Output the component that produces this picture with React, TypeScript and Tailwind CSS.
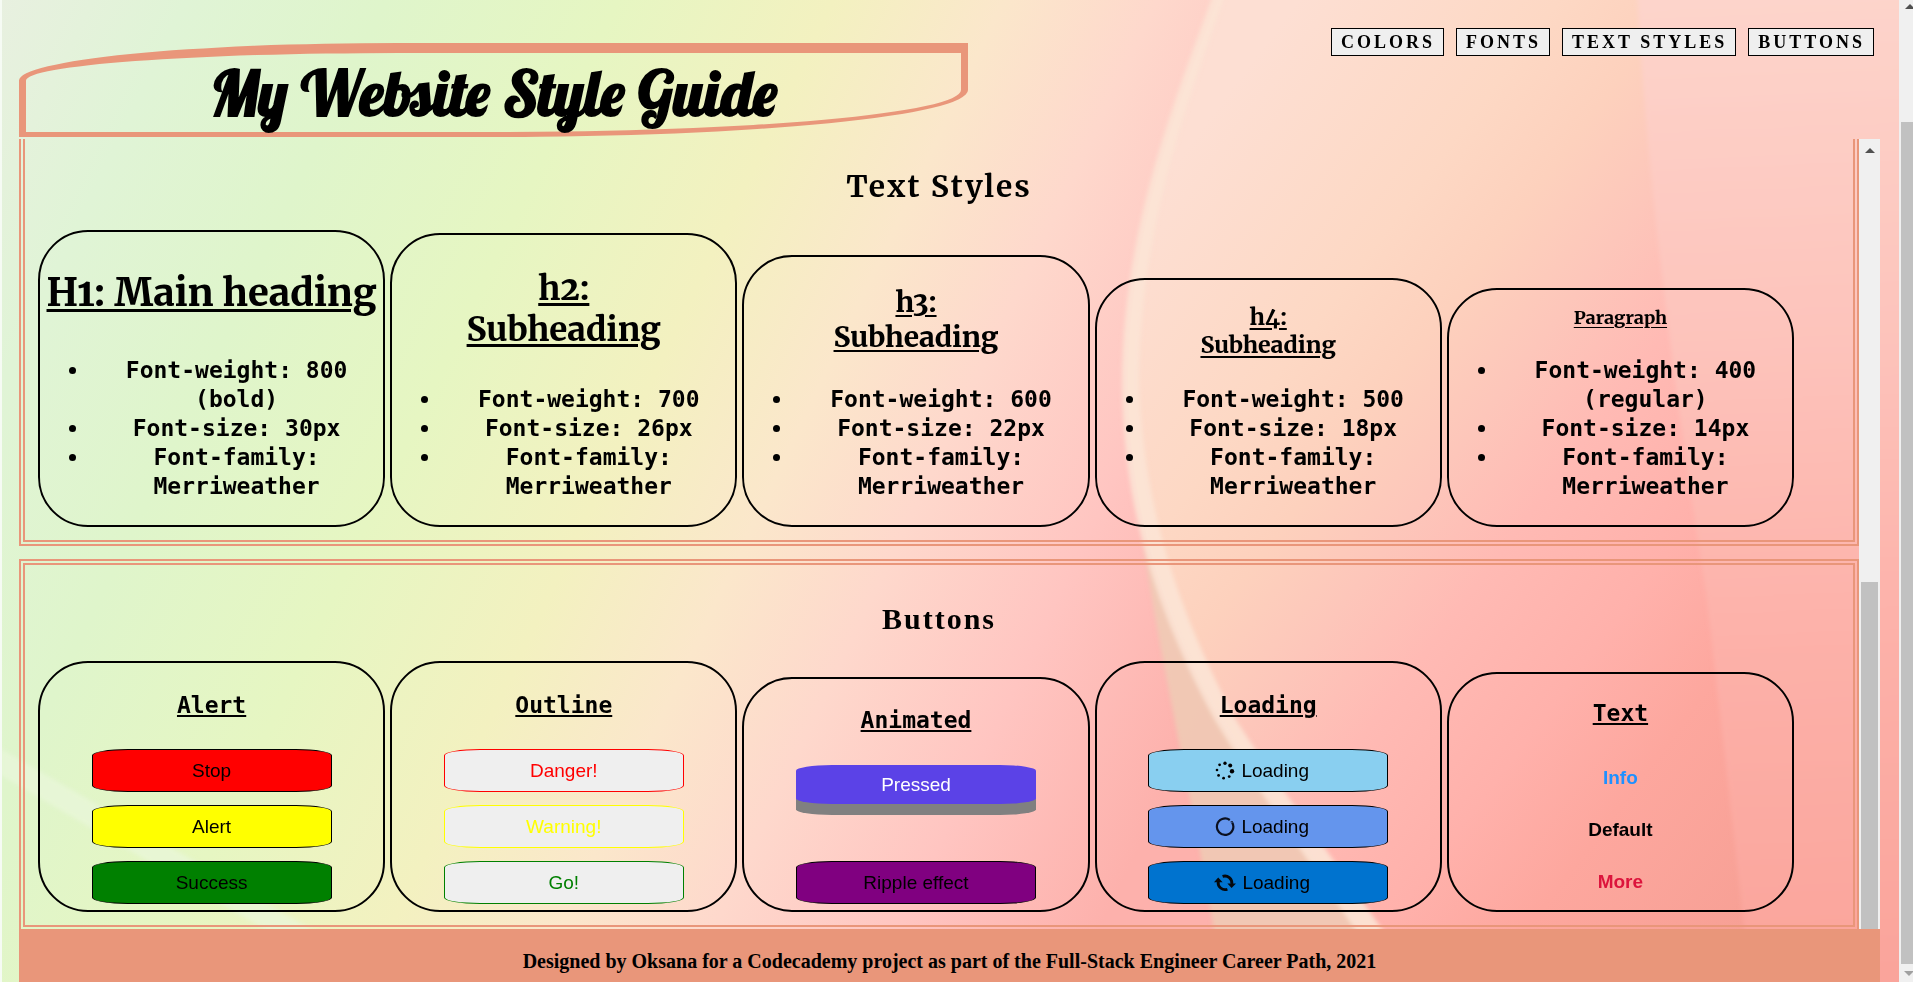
import React from "react";

const nav = ["COLORS", "FONTS", "TEXT STYLES", "BUTTONS"];

const textStyles = [
  { title: "h1", lines: ["H1: Main heading"], cls: "text-[38px] leading-[48px] mt-[37px] mb-10 decoration-[3px]", weight: "800 (bold)", size: "30px" },
  { title: "h2", lines: ["h2:", "Subheading"], cls: "text-[33px] leading-[41px] mt-[33px] mb-9 decoration-[3px]", weight: "700", size: "26px" },
  { title: "h3", lines: ["h3:", "Subheading"], cls: "text-[28px] leading-[35px] mt-7 mb-[31px] decoration-2", weight: "600", size: "22px" },
  { title: "h4", lines: ["h4:", "Subheading"], cls: "text-[23px] leading-[28px] mt-[23px] mb-[27px] decoration-2", weight: "500", size: "18px" },
  { title: "p", lines: ["Paragraph"], cls: "text-[18px] leading-[22px] mt-[17px] mb-7 decoration-1", weight: "400 (regular)", size: "14px" },
];

const serif = "font-['Merriweather','DejaVu_Serif_Condensed','DejaVu_Serif',serif]";
const times = "font-['Liberation_Serif',serif]";
const sans = "font-['Liberation_Sans',sans-serif]";
const mono = "font-['Consolas','DejaVu_Sans_Mono',monospace]";
const card = "rounded-[50px] border-2 border-black text-center";
const sectionBox = "border-[6px] border-double border-[#e9967a] pr-[59px] pl-[13px]";
const pill = `${sans} flex h-[43px] w-60 items-center justify-center rounded-[15%] border text-[19px] leading-6`;
const loader = `${pill} gap-[6px] border-black pr-3`;
const cardTitle = `${mono} text-[23px] leading-[29px] font-bold underline decoration-2 underline-offset-2`;

function Backdrop() {
  return (
    <svg className="absolute inset-0 h-full w-full" viewBox="0 0 1913 982" preserveAspectRatio="none" aria-hidden="true">
      <defs>
        <linearGradient id="left" gradientUnits="userSpaceOnUse" x1="0" y1="0" x2="1257" y2="601">
          <stop offset="0" stopColor="#e8f0e0" />
          <stop offset="0.12" stopColor="#e0f4d6" />
          <stop offset="0.25" stopColor="#dff5cb" />
          <stop offset="0.4" stopColor="#e6f6c2" />
          <stop offset="0.54" stopColor="#f3f1c0" />
          <stop offset="0.65" stopColor="#fbe7cb" />
          <stop offset="0.75" stopColor="#fed8cc" />
          <stop offset="0.87" stopColor="#ffc5c1" />
          <stop offset="1" stopColor="#fdb1ac" />
        </linearGradient>
        <linearGradient id="mid" gradientUnits="userSpaceOnUse" x1="800" y1="600" x2="1560" y2="1170">
          <stop offset="0.04" stopColor="#fddfd3" />
          <stop offset="0.26" stopColor="#fdd8c4" />
          <stop offset="0.36" stopColor="#fdd1bd" />
          <stop offset="0.46" stopColor="#fdc6ba" />
          <stop offset="0.56" stopColor="#ffbab4" />
          <stop offset="0.7" stopColor="#ffb1ab" />
          <stop offset="0.82" stopColor="#fda79e" />
          <stop offset="1" stopColor="#f7a095" />
        </linearGradient>
        <linearGradient id="right" gradientUnits="userSpaceOnUse" x1="1760" y1="0" x2="1800" y2="982">
          <stop offset="0" stopColor="#fdd4cb" />
          <stop offset="0.35" stopColor="#fdc3bb" />
          <stop offset="0.65" stopColor="#fdb1a9" />
          <stop offset="1" stopColor="#faa49b" />
        </linearGradient>
        <filter id="soft" x="-10%" y="-10%" width="120%" height="120%">
          <feGaussianBlur stdDeviation="2" />
        </filter>
      </defs>
      <rect width="1913" height="982" fill="url(#left)" />
      <path d="M1218 0C1180 100 1128 230 1128 385C1130 500 1155 600 1220 720C1265 795 1315 860 1395 982H1913V0Z" fill="url(#mid)" />
      <path d="M1637 -10C1645 150 1668 350 1707 600C1725 760 1740 880 1750 992H1940V-10Z" fill="url(#right)" filter="url(#soft)" />
      <g filter="url(#soft)">
        <path d="M1140 520C1155 640 1200 830 1222 982H1395C1315 860 1265 795 1220 720C1180 650 1155 580 1140 520Z" fill="#efcbb5" opacity="0.85" />
        <path d="M1213 -5C1175 100 1122 230 1122 385C1124 500 1150 600 1215 720C1260 795 1310 860 1390 982H1418C1336 860 1284 795 1236 720C1172 600 1144 500 1139 385C1139 230 1188 100 1225 -5Z" fill="#fce4d5" opacity="0.9" />
        <path d="M0 748L330 940L300 950L0 775Z" fill="#e9f7dc" opacity="0.7" />
      </g>
      <rect width="2" height="982" fill="#f6fbf4" />
    </svg>
  );
}

function DotsSpinner() {
  return (
    <svg className="size-5" viewBox="0 0 20 20" aria-hidden="true">
      <circle cx="10" cy="2.2" r="1.7" />
      <circle cx="15.2" cy="4.6" r="2" />
      <circle cx="17" cy="10.2" r="2.2" />
      <circle cx="14.2" cy="15.6" r="1.4" />
      <circle cx="8.6" cy="17.2" r="1.4" />
      <circle cx="3.6" cy="14.4" r="1.4" />
      <circle cx="2" cy="9" r="1.3" />
      <circle cx="4.6" cy="3.8" r="1.4" />
    </svg>
  );
}

function RingSpinner() {
  return (
    <svg className="size-5" viewBox="0 0 20 20" fill="none" stroke="#0b1020" aria-hidden="true">
      <path d="M17.2 5.6A8.2 8.2 0 1 1 14.8 3" strokeWidth="2.2" />
      <path d="M15.6 5L17.8 4.6" strokeWidth="1.2" />
    </svg>
  );
}

function SyncSpinner() {
  return (
    <svg className="h-5 w-[22px]" viewBox="0 0 22 20" aria-hidden="true">
      <g fill="none" stroke="#05080c" strokeWidth="2.8">
        <path d="M8.6 3.4A7 7 0 0 1 17.8 11" />
        <path d="M13.4 16.2A7 7 0 0 1 4.2 8.6" />
      </g>
      <path d="M13.4 10.4H22L17.6 15Z M0 9.2H8.6L4.2 4.6Z" fill="#05080c" />
    </svg>
  );
}

export default function App() {
  return (
    <div className="relative flex h-screen overflow-hidden bg-[#fdd] text-black">
      <Backdrop />
      <div className="relative flex min-w-0 flex-1 flex-col px-[19px]">
        <header className="flex h-[139px] shrink-0 items-start justify-between">
          <div className="mt-[43px] flex h-[94px] w-[51%] items-center justify-center rounded-[40%_0_50%_0] border-x-[7px] border-t-[10px] border-b-[5px] border-[#e9967a]">
            <h1 className="font-['Lobster','Liberation_Serif',serif] text-[62px] leading-[76px] font-bold whitespace-nowrap">
              My Website Style Guide
            </h1>
          </div>
          <nav className="mt-7 mr-[6px] flex gap-3">
            {nav.map((n) => (
              <button key={n} type="button" className={`${times} h-7 border border-black bg-[#efefef] pr-2 pl-[9px] text-[18px] leading-6 font-bold tracking-[3px] whitespace-nowrap`}>
                {n}
              </button>
            ))}
          </nav>
        </header>

        <div className="flex min-h-0 flex-1">
          <main className="min-w-0 flex-1 overflow-hidden">
            <section className={`${sectionBox} border-t-0 pb-[13px]`}>
              <h2 className={`${serif} -mr-[46px] pt-[27px] text-center text-[30px] leading-10 font-bold tracking-[2px]`}>Text Styles</h2>
              <div className="mt-6 grid grid-cols-5 items-end gap-[5px]">
                {textStyles.map((t) => (
                  <article key={t.title} className={card}>
                    <h3 className={`${serif} ${t.cls} font-extrabold oldstyle-nums underline underline-offset-3`}>
                      {t.lines.map((l) => (
                        <span key={l} className="block whitespace-nowrap">{l}</span>
                      ))}
                    </h3>
                    <ul className={`${mono} mb-6 -mt-px list-disc pl-[50px] text-[23px] leading-[29px] font-bold`}>
                      <li>Font-weight: {t.weight}</li>
                      <li>Font-size: {t.size}</li>
                      <li>Font-family: Merriweather</li>
                    </ul>
                  </article>
                ))}
              </div>
            </section>

            <section className={`${sectionBox} mt-[13px] pb-[13px]`}>
              <h2 className={`${times} -mr-[46px] pt-[34px] text-center text-[30px] leading-10 font-bold tracking-[2px]`}>Buttons</h2>
              <div className="mt-[22px] grid grid-cols-5 items-end gap-[5px]">
                <article className={`${card} flex flex-col items-center gap-[13px] pb-[6px]`}>
                  <h3 className={`${cardTitle} mt-7 mb-4`}>Alert</h3>
                  <button type="button" className={`${pill} border-black bg-[#ff0000]`}>Stop</button>
                  <button type="button" className={`${pill} border-black bg-[#ffff00]`}>Alert</button>
                  <button type="button" className={`${pill} border-black bg-[#008000]`}>Success</button>
                </article>
                <article className={`${card} flex flex-col items-center gap-[13px] pb-[6px]`}>
                  <h3 className={`${cardTitle} mt-7 mb-4`}>Outline</h3>
                  <button type="button" className={`${pill} border-[#ff0000] bg-[#efefef] text-[#ff0000]`}>Danger!</button>
                  <button type="button" className={`${pill} border-[#ffff00] bg-[#efefef] text-[#ffff00]`}>Warning!</button>
                  <button type="button" className={`${pill} border-[#008000] bg-[#efefef] text-[#008000]`}>Go!</button>
                </article>
                <article className={`${card} flex flex-col items-center pb-[6px]`}>
                  <h3 className={`${cardTitle} mt-[27px] mb-[30px]`}>Animated</h3>
                  <button type="button" className={`${sans} h-[39px] w-60 rounded-[15%] bg-[#5b42e7] text-[19px] leading-6 text-white shadow-[0_11px_0_#808080]`}>Pressed</button>
                  <button type="button" className={`${pill} mt-[57px] border-black bg-[#800080]`}>Ripple effect</button>
                </article>
                <article className={`${card} flex flex-col items-center gap-[13px] pb-[6px]`}>
                  <h3 className={`${cardTitle} mt-7 mb-4`}>Loading</h3>
                  <button type="button" className={`${loader} bg-[#89cff0]`}><DotsSpinner />Loading</button>
                  <button type="button" className={`${loader} bg-[#6495ed]`}><RingSpinner />Loading</button>
                  <button type="button" className={`${loader} bg-[#0073cf]`}><SyncSpinner />Loading</button>
                </article>
                <article className={`${card} ${sans} flex flex-col items-center gap-7 pb-4 text-[19px] leading-6 font-bold`}>
                  <h3 className={`${cardTitle} mt-[25px] mb-[10px]`}>Text</h3>
                  <button type="button" className="font-bold text-[#1e90ff]">Info</button>
                  <button type="button" className="font-bold">Default</button>
                  <button type="button" className="font-bold text-[#dc143c]">More</button>
                </article>
              </div>
            </section>
          </main>
          <div className="flex w-[21px] flex-col bg-[#f0f0f0]" aria-hidden="true">
            <svg className="mx-auto mt-[9px] h-[5px] w-[10px]" viewBox="0 0 10 5"><path d="M0 5L5 0L10 5Z" fill="#505050" /></svg>
            <div className="mt-[429px] mr-[2px] ml-[2px] flex-1 bg-[#c1c1c1]" />
          </div>
        </div>

        <footer className={`${times} flex h-[53px] shrink-0 items-center justify-center bg-[#e9967a] pt-[10px] text-[20px] leading-6 font-bold`}>
          Designed by Oksana for a Codecademy project as part of the Full-Stack Engineer Career Path, 2021
        </footer>
      </div>

      <div className="relative flex w-[14px] shrink-0 flex-col bg-[#f0f0f0]" aria-hidden="true">
        <svg className="mt-1 ml-[6px] h-[5px] w-[10px] shrink-0" viewBox="0 0 10 5"><path d="M0 5L5 0L10 5Z" fill="#505050" /></svg>
        <div className="mt-[113px] ml-[2px] flex-1 bg-[#c1c1c1]" />
        <svg className="mt-[7px] mb-[6px] ml-[5px] h-[5px] w-[10px] shrink-0" viewBox="0 0 10 5"><path d="M0 0H10L5 5Z" fill="#a0a0a0" /></svg>
      </div>
    </div>
  );
}
